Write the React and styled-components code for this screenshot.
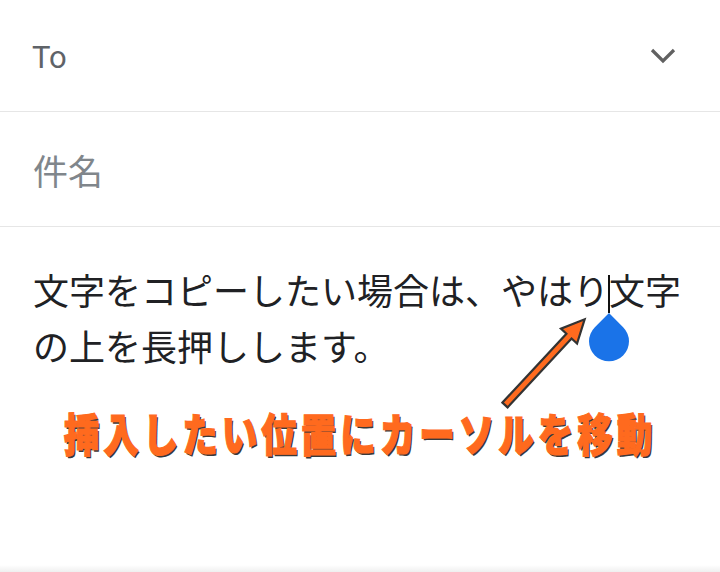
import React from "react";
import styled, { createGlobalStyle } from "styled-components";

const Global = createGlobalStyle`
  html, body { margin: 0; padding: 0; background: #fff; }
  body { font-family: Roboto, "Noto Sans CJK JP", sans-serif; }
`;

const Page = styled.div`
  position: relative;
  width: 720px;
  height: 572px;
  display: flex;
  flex-direction: column;
  overflow: hidden;
  background: #fff;
`;

const Field = styled.div`
  height: ${(p) => p.$h}px;
  display: flex;
  align-items: center;
  justify-content: space-between;
  padding: 0 33px;
  border-bottom: 1px solid #e6e6e6;
  flex-shrink: 0;
`;

const ToLabel = styled.span`
  font-family: Roboto, sans-serif;
  font-size: 31px;
  color: #5f6368;
  margin: 3px 0 0 -1px;
`;

const Placeholder = styled.span`
  font-family: "Noto Sans CJK JP", sans-serif;
  font-size: 35px;
  color: #80868b;
  line-height: 1;
`;

const Chevron = styled.svg`
  width: 26px;
  height: 16px;
  margin-right: 11px;
  display: block;
`;

const Body = styled.div`
  flex: 1;
  padding: 34px 33px 0;
  display: flex;
  flex-direction: column;
`;

const Message = styled.p`
  margin: 0;
  font-family: "Noto Sans CJK JP", sans-serif;
  font-size: 36px;
  line-height: 56px;
  color: #202124;
`;

const Cursor = styled.span`
  position: relative;
  display: inline-block;
  width: 2px;
  height: 38px;
  margin: 0 -1px;
  background: #111;
  vertical-align: -8px;
`;

const Handle = styled.svg`
  position: absolute;
  top: 38px;
  left: -19px;
  width: 40px;
  height: 49px;
  display: block;
`;

const Callout = styled.div`
  margin-top: 37px;
  display: flex;
  justify-content: center;
`;

const CalloutText = styled.span`
  display: inline-block;
  font-family: "Noto Sans CJK JP", sans-serif;
  font-weight: 900;
  font-size: 45px;
  line-height: 45px;
  letter-spacing: 5px;
  color: #ff6a1e;
  -webkit-text-stroke: 1.2px #ff6a1e;
  text-shadow: 2px 2px 0 #3a3a3a;
  transform: scaleX(0.79);
  white-space: nowrap;
`;

const Footer = styled.div`
  height: 7px;
  flex-shrink: 0;
  background: linear-gradient(#ffffff, #efefef);
`;

const Overlay = styled.svg`
  position: absolute;
  left: 0;
  top: 0;
  width: 720px;
  height: 572px;
  pointer-events: none;
`;

export default function App() {
  return (
    <>
      <Global />
      <Page>
        <Field $h={111}>
          <ToLabel>To</ToLabel>
          <Chevron viewBox="0 0 26 16">
            <path d="M2 2 L13 13 L24 2" fill="none" stroke="#616161" strokeWidth="3.2" />
          </Chevron>
        </Field>
        <Field $h={114}>
          <Placeholder>件名</Placeholder>
        </Field>
        <Body>
          <Message>
            文字をコピーしたい場合は、やはり
            <Cursor>
              <Handle viewBox="0 0 40 49">
                <path d="M20 0 L34.14 14.14 A20 20 0 1 1 5.86 14.14 Z" fill="#1a73e8" />
              </Handle>
            </Cursor>
            {"文字"}
            <br />
            {"の上を長押しします。"}
          </Message>
          <Callout>
            <CalloutText>挿入したい位置にカーソルを移動</CalloutText>
          </Callout>
        </Body>
        <Footer />
        <Overlay viewBox="0 0 720 572">
          <g transform="translate(505 405) rotate(-47.1)">
            <polygon
              points="0,-3.5 94,-3.5 94,-11 117,0 94,11 94,3.5 0,3.5"
              fill="#ff6a1e"
              stroke="#333"
              strokeWidth="2.2"
              strokeLinejoin="miter"
            />
          </g>
        </Overlay>
      </Page>
    </>
  );
}
